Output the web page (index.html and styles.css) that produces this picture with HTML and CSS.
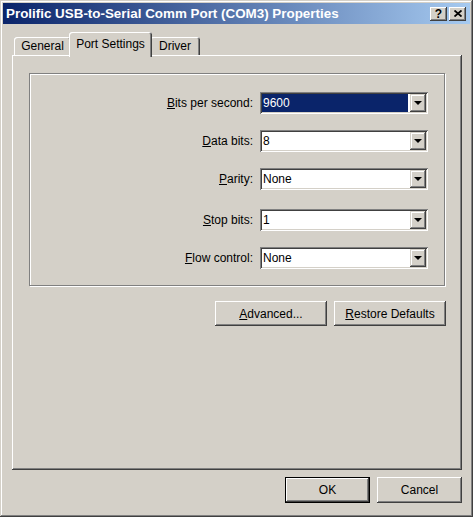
FILE: index.html
```html
<!DOCTYPE html>
<html lang="en">
<head>
    <meta charset="UTF-8">
    <title>Prolific USB-to-Serial Comm Port (COM3) Properties</title>
    <link rel="stylesheet" href="styles.css">
</head>
<body>
    <div class="window">
        <div class="titlebar">
            <span class="title">Prolific USB-to-Serial Comm Port (COM3) Properties</span>
            <div class="title-buttons">
                <span class="tbtn help">?</span>
                <span class="tbtn">
                    <svg width="8" height="7" viewBox="0 0 8 7">
                        <path d="M0.5 0.5 L7.5 6.5 M7.5 0.5 L0.5 6.5" stroke="#000" stroke-width="1.8"/>
                    </svg>
                </span>
            </div>
        </div>

        <div class="tabs">
            <div class="tab tab-general">General</div>
            <div class="tab active">Port Settings</div>
            <div class="tab tab-driver">Driver</div>
        </div>

        <div class="panel">
            <div class="group">
                <div class="field">
                    <label><u>B</u>its per second:</label>
                    <div class="combo">
                        <span class="value selected">9600</span>
                        <span class="drop"></span>
                    </div>
                </div>
                <div class="field">
                    <label><u>D</u>ata bits:</label>
                    <div class="combo">
                        <span class="value">8</span>
                        <span class="drop"></span>
                    </div>
                </div>
                <div class="field">
                    <label><u>P</u>arity:</label>
                    <div class="combo">
                        <span class="value">None</span>
                        <span class="drop"></span>
                    </div>
                </div>
                <div class="field field-spaced">
                    <label><u>S</u>top bits:</label>
                    <div class="combo">
                        <span class="value">1</span>
                        <span class="drop"></span>
                    </div>
                </div>
                <div class="field">
                    <label><u>F</u>low control:</label>
                    <div class="combo">
                        <span class="value">None</span>
                        <span class="drop"></span>
                    </div>
                </div>
            </div>

            <div class="actions">
                <button class="btn wide"><u>A</u>dvanced...</button>
                <button class="btn wide"><u>R</u>estore Defaults</button>
            </div>
        </div>

        <div class="footer">
            <button class="btn default">OK</button>
            <button class="btn">Cancel</button>
        </div>
    </div>
</body>
</html>
```

FILE: styles.css
```css
body {
    margin: 0;
    font-family: "Liberation Sans", Arial, sans-serif;
    font-size: 12px;
    color: #000;
    background: #d4d0c8;
}
.window {
    width: 473px;
    height: 517px;
    box-sizing: border-box;
    padding: 3px;
    background: #d4d0c8;
    box-shadow: inset -1px -1px #404040, inset 1px 1px #d4d0c8,
                inset -2px -2px #808080, inset 2px 2px #fff;
    display: flex;
    flex-direction: column;
}
.titlebar {
    height: 21px;
    display: flex;
    align-items: center;
    justify-content: space-between;
    padding: 0 4px 0 3px;
    background: linear-gradient(90deg, #0a246a, #a6caf0);
}
.title {
    color: #fff;
    font-weight: bold;
    font-size: 13.4px;
}
.title-buttons {
    display: flex;
    gap: 2px;
}
.tbtn {
    width: 17px;
    height: 14px;
    box-sizing: border-box;
    display: flex;
    align-items: center;
    justify-content: center;
    background: #d4d0c8;
    box-shadow: inset -1px -1px #404040, inset 1px 1px #fff,
                inset -2px -2px #808080;
    font-weight: bold;
    font-size: 12px;
    line-height: 12px;
}
.tabs {
    height: 31px;
    display: flex;
    align-items: flex-end;
    padding-left: 11px;
    position: relative;
    z-index: 1;
}
.tab {
    height: 18px;
    box-sizing: border-box;
    padding-top: 2px;
    line-height: 14px;
    text-align: center;
    background: #d4d0c8;
    border-radius: 3px 3px 0 0;
    box-shadow: inset 1px 1px #fff, inset -1px 0 #404040, inset -2px 0 #808080;
}
.tab-general {
    width: 57px;
}
.tab-driver {
    width: 50px;
}
.tab.active {
    width: 83px;
    height: 25px;
    padding-top: 5px;
    margin: 0 -2px -2px -2px;
    position: relative;
    z-index: 2;
}
.panel {
    height: 415px;
    width: 450px;
    box-sizing: border-box;
    margin-left: 9px;
    padding: 18px 17px 0 17px;
    box-shadow: inset -1px -1px #404040, inset 1px 1px #fff,
                inset -2px -2px #808080;
}
.group {
    height: 213px;
    box-sizing: border-box;
    border: 1px solid #808080;
    box-shadow: inset 1px 1px #fff, 1px 1px #fff;
    padding: 18px 16px 0 0;
    display: flex;
    flex-direction: column;
    gap: 16px;
}
.field {
    display: grid;
    grid-template-columns: 1fr 168px;
    column-gap: 7px;
    align-items: center;
}
.field-spaced {
    margin-top: 3px;
}
.field label {
    text-align: right;
}
.combo {
    height: 22px;
    box-sizing: border-box;
    padding: 2px;
    display: flex;
    align-items: stretch;
    background: #fff;
    box-shadow: inset 1px 1px #808080, inset -1px -1px #fff,
                inset 2px 2px #404040, inset -2px -2px #d4d0c8;
}
.value {
    flex: 1;
    margin-right: 2px;
    padding-left: 1px;
    line-height: 19px;
}
.value.selected {
    background: #0a246a;
    color: #fff;
}
.drop {
    width: 16px;
    position: relative;
    background: #d4d0c8;
    box-shadow: inset -1px -1px #404040, inset 1px 1px #d4d0c8,
                inset -2px -2px #808080, inset 2px 2px #fff;
}
.drop::after {
    content: "";
    position: absolute;
    left: 4px;
    top: 7px;
    border-left: 4px solid transparent;
    border-right: 4px solid transparent;
    border-top: 4px solid #000;
}
.actions {
    display: flex;
    justify-content: flex-end;
    gap: 7px;
    margin: 15px -1px 0 0;
}
.btn {
    font-family: inherit;
    font-size: 12px;
    color: #000;
    height: 26px;
    width: 85px;
    padding: 0;
    border: none;
    background: #d4d0c8;
    box-shadow: inset -1px -1px #404040, inset 1px 1px #fff,
                inset -2px -2px #808080;
}
.btn.wide {
    width: 112px;
    height: 25px;
}
.btn.default {
    border: 1px solid #000;
}
.footer {
    display: flex;
    justify-content: flex-end;
    gap: 7px;
    margin-top: 7px;
    padding-right: 8px;
}
```
